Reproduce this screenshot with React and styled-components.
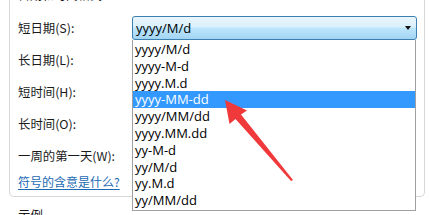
import React from "react";
import styled, { createGlobalStyle } from "styled-components";

const Global = createGlobalStyle`
  html, body { margin: 0; padding: 0; background: #ffffff; }
  body { font-family: "Noto Sans CJK SC", "Noto Sans", sans-serif; color: #1a1a1a; }
  #root { width: 429px; height: 215px; overflow: hidden; }
`;

const Page = styled.div`
  position: relative;
  width: 429px;
  height: 215px;
  overflow: hidden;
  background: #fff;
`;

const GroupBox = styled.div`
  box-sizing: border-box;
  margin: -13px 0 0 9px;
  width: 416px;
  height: 210px;
  border: 1px solid #d7d7d7;
  border-top: none;
  border-radius: 0 0 5px 5px;
  padding: 0 0 0 8px;
  display: flex;
  flex-direction: column;
`;

const Heading = styled.div`
  height: 16px;
  line-height: 16px;
  font-size: 12px;
`;

const Rows = styled.div`
  margin-top: 13px;
  display: flex;
  flex-direction: column;
  gap: 8px;
`;

const Row = styled.div`
  display: grid;
  grid-template-columns: 114px 285px;
  align-items: center;
  height: 24px;
`;

const Label = styled.div`
  font-size: 12.4px;
  line-height: 16px;
`;

const ComboWrap = styled.div`
  position: relative;
  height: 24px;
`;

const Combo = styled.div`
  box-sizing: border-box;
  height: 24px;
  border: 1px solid #3c7fb1;
  border-radius: 3px;
  background: linear-gradient(
    to bottom,
    #eaf6fd 0%,
    #d9f0fc 45%,
    #bee6fd 50%,
    #a2d5f3 100%
  );
  display: flex;
  align-items: center;
  justify-content: space-between;
  padding: 0 5px 0 3px;
  font-family: "Open Sans", "Noto Sans", sans-serif;
  font-size: 13px;
  color: #000;
`;

const Caret = styled.span`
  width: 0;
  height: 0;
  border-left: 3.5px solid transparent;
  border-right: 3.5px solid transparent;
  border-top: 4px solid #111;
`;

const List = styled.div`
  position: absolute;
  z-index: 2;
  left: 0;
  top: 24px;
  box-sizing: border-box;
  width: 284px;
  border: 1px solid #a0a0a0;
  border-top: none;
  padding: 1px 0;
  background: #fff;
  display: flex;
  flex-direction: column;
`;

const Item = styled.div`
  height: 16.8px;
  line-height: 16.8px;
  padding-left: 2px;
  font-family: "Open Sans", "Noto Sans", sans-serif;
  font-size: 13px;
  color: ${(p) => (p.$selected ? "#ffffff" : "#000000")};
  background: ${(p) => (p.$selected ? "#3399ff" : "transparent")};
`;

const Link = styled.a`
  margin-top: 6px;
  display: block;
  width: max-content;
  font-size: 12px;
  line-height: 16px;
  color: #1c6ab5;
  text-decoration: underline;
  text-underline-offset: 2px;
`;

const Section = styled.div`
  margin: 10px 0 0 18px;
  font-size: 12.4px;
  line-height: 16px;
`;

const ArrowLayer = styled.svg`
  position: absolute;
  left: 0;
  top: 0;
  z-index: 5;
  pointer-events: none;
`;

const formats = [
  "yyyy/M/d",
  "yyyy-M-d",
  "yyyy.M.d",
  "yyyy-MM-dd",
  "yyyy/MM/dd",
  "yyyy.MM.dd",
  "yy-M-d",
  "yy/M/d",
  "yy.M.d",
  "yy/MM/dd",
];

const labels = ["短日期(S):", "长日期(L):", "短时间(H):", "长时间(O):", "一周的第一天(W):"];

export default function App() {
  return (
    <Page>
      <Global />
      <GroupBox>
        <Heading>日期和时间格式</Heading>
        <Rows>
          {labels.map((l, i) => (
            <Row key={l}>
              <Label>{l}</Label>
              {i === 0 ? (
                <ComboWrap>
                  <Combo>
                    <span>yyyy/M/d</span>
                    <Caret />
                  </Combo>
                  <List>
                    {formats.map((f, j) => (
                      <Item key={f} $selected={j === 3}>
                        {f}
                      </Item>
                    ))}
                  </List>
                </ComboWrap>
              ) : (
                <span />
              )}
            </Row>
          ))}
        </Rows>
        <Link href="#">符号的含意是什么?</Link>
      </GroupBox>
      <Section>示例</Section>
      <ArrowLayer width="429" height="215" viewBox="0 0 429 215">
        <polygon
          points="225,100 247,110.5 241,114.5 293,180 291,181 235.5,119 229.5,124"
          fill="#f0393b"
        />
      </ArrowLayer>
    </Page>
  );
}
